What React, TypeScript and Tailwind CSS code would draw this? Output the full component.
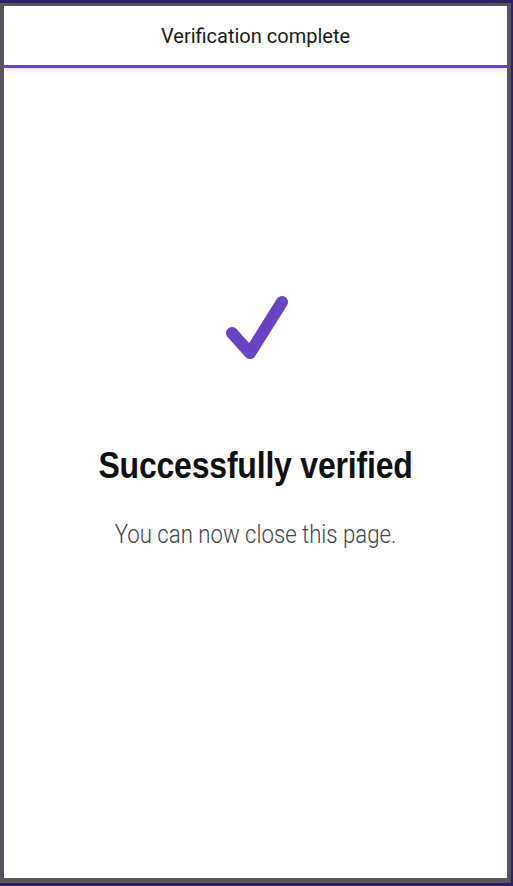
export default function App() {
  return (
    <div className="w-[513px] h-[886px] bg-[#2e1f66] pt-[3px] pr-[2px] pb-[3px] overflow-hidden">
      <div className="h-full bg-[#58565c] pt-[3px] pl-[4px] pr-[4px] pb-[5px]">
        <div className="h-full bg-white flex flex-col">
          <div className="h-[62px] shrink-0 flex items-center justify-center border-b-[3px] border-[#6a46b4] shadow-[0_2px_4px_rgba(106,70,180,0.18)]">
            <span className="text-[20px] leading-[24px] text-[#1a1a1a] font-['Roboto',sans-serif] mt-[1px]">Verification complete</span>
          </div>
          <div className="flex flex-col items-center">
            <svg className="mt-[222px] ml-[4px]" width="75" height="75" viewBox="0 0 75 75">
              <path d="M12 43 L30 63 L62 12" fill="none" stroke="#6a43c4" strokeWidth="12" strokeLinecap="round" strokeLinejoin="round" />
            </svg>
            <h1 className="mt-[81px] text-[32px] leading-[40px] font-bold text-[#111] font-['Liberation_Sans',sans-serif] tracking-[-0.2px] scale-y-[1.13]">Successfully verified</h1>
            <p className="mt-[34px] text-[22.2px] leading-[28px] font-light text-[#444] font-['Roboto',sans-serif] scale-y-[1.14]">You can now close this page.</p>
          </div>
        </div>
      </div>
    </div>
  );
}
